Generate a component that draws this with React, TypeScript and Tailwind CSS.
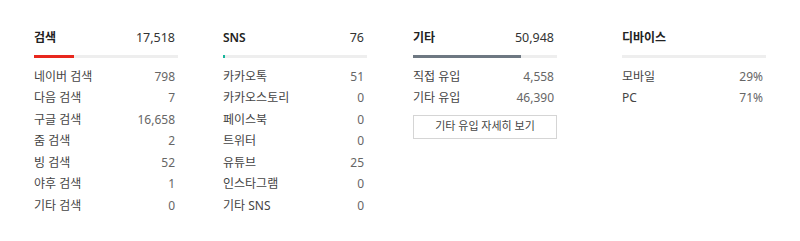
import React from 'react';

type Row = { label: string; value: string };

type Group = {
  title: string;
  total?: string;
  fill: string;
  color: string;
  rows: Row[];
  more?: string;
  offset: string;
};

const groups: Group[] = [
  {
    title: '검색',
    total: '17,518',
    fill: 'w-[40px]',
    color: 'bg-[#e8281e]',
    offset: 'ml-[34px]',
    rows: [
      { label: '네이버 검색', value: '798' },
      { label: '다음 검색', value: '7' },
      { label: '구글 검색', value: '16,658' },
      { label: '줌 검색', value: '2' },
      { label: '빙 검색', value: '52' },
      { label: '야후 검색', value: '1' },
      { label: '기타 검색', value: '0' },
    ],
  },
  {
    title: 'SNS',
    total: '76',
    fill: 'w-[2px]',
    color: 'bg-[#16b59b]',
    offset: 'ml-[45px]',
    rows: [
      { label: '카카오톡', value: '51' },
      { label: '카카오스토리', value: '0' },
      { label: '페이스북', value: '0' },
      { label: '트위터', value: '0' },
      { label: '유튜브', value: '25' },
      { label: '인스타그램', value: '0' },
      { label: '기타 SNS', value: '0' },
    ],
  },
  {
    title: '기타',
    total: '50,948',
    fill: 'w-[108px]',
    color: 'bg-[#6e7882]',
    offset: 'ml-[46px]',
    rows: [
      { label: '직접 유입', value: '4,558' },
      { label: '기타 유입', value: '46,390' },
    ],
    more: '기타 유입 자세히 보기',
  },
  {
    title: '디바이스',
    fill: 'w-0',
    color: 'bg-transparent',
    offset: 'ml-[65px]',
    rows: [
      { label: '모바일', value: '29%' },
      { label: 'PC', value: '71%' },
    ],
  },
];

function Column({ g }: { g: Group }) {
  return (
    <div className={`w-[144px] shrink-0 ${g.offset}`}>
      <div className="flex items-center justify-between h-[20px] pr-[3px]">
        <span className="text-[12px] font-semibold text-[#222]">{g.title}</span>
        {g.total && <span className="text-[12.5px] text-[#333]">{g.total}</span>}
      </div>
      <div className="mt-[7px] h-[3px] bg-[#eeeeee]">
        <div className={`h-full ${g.fill} ${g.color}`} />
      </div>
      <ul className="mt-[8px]">
        {g.rows.map((r) => (
          <li key={r.label} className="flex items-center justify-between h-[21.5px] pr-[3px] text-[12px]">
            <span className="text-[#444]">{r.label}</span>
            <span className="text-[#666]">{r.value}</span>
          </li>
        ))}
      </ul>
      {g.more && (
        <button className="mt-[5.5px] w-full h-[24px] border border-[#d5d5d5] bg-white text-[11px] text-[#444]">
          {g.more}
        </button>
      )}
    </div>
  );
}

export default function App() {
  return (
    <div
      className="w-[800px] h-[241px] bg-white pt-[28px] flex items-start"
      style={{ fontFamily: '"Noto Sans", "Noto Sans CJK KR", sans-serif' }}
    >
      {groups.map((g) => (
        <Column key={g.title} g={g} />
      ))}
    </div>
  );
}
